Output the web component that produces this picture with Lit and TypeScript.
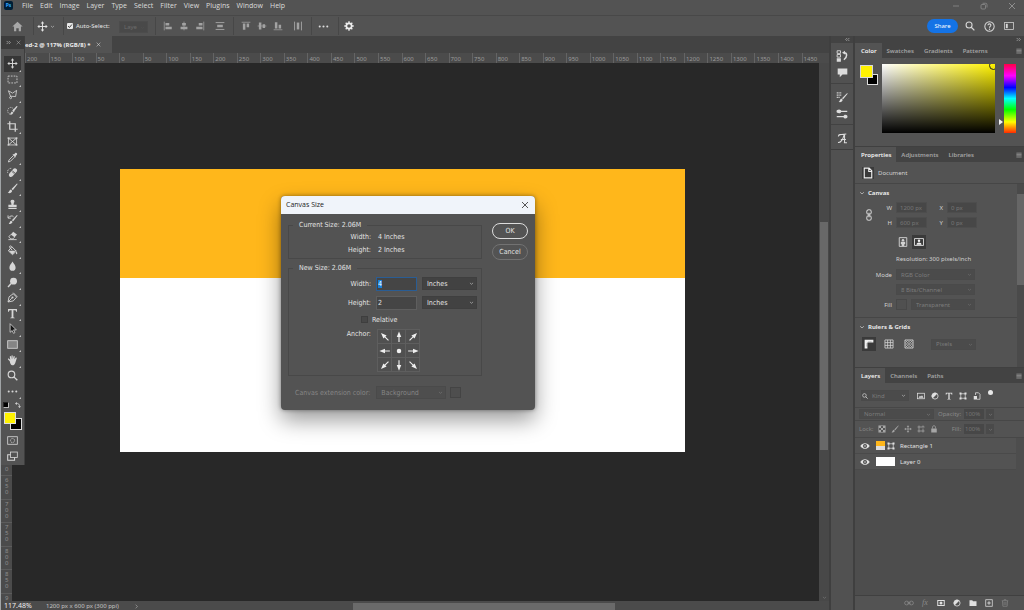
import { LitElement, html, svg, css } from "lit";
import { customElement } from "lit/decorators.js";
import { classMap } from "lit/directives/class-map.js";

/* Icon artwork, drawn on a 16 x 16 grid with currentColor. */
const icons: Record<string, unknown> = {
  move: svg`<path d="M8 2v12M2 8h12" stroke-width="1.4"/><path class="f" d="M8 .5l2.500 3h-5zM8 15.500l2.500-3h-5zM.5 8l3-2.500v5zM15.500 8l-3-2.500v5z"/>`,
  marquee: svg`<rect x="1.500" y="3" width="13" height="10" stroke-dasharray="2.500 1.600" stroke-width="1.200"/>`,
  lasso: svg`<path d="M5.500 11.500L2 2.500l6 3.500 6-4-1.500 9-7-.5c-2 .5-2.500 3-.5 3.500s2-2 .5-3" stroke-width="1.200"/>`,
  quick: svg`<ellipse cx="5.500" cy="8.500" rx="4.500" ry="5" stroke-dasharray="1.600 1.300"/><path class="f" d="M15.500 2L9.500 10l-2-1.500L14 1.500zM7 9.500l2 1.500c-.5 2.500-3 3.500-5 2.500 1.500-.5 1.500-3 3-4z"/>`,
  crop: svg`<path d="M4 .5V12h11.500M.5 4H12v11.500" stroke-width="1.800"/>`,
  frame: svg`<rect x="2" y="3" width="12" height="10"/><path d="M2 3l12 10M14 3L2 13M.5 3h3M12.500 3h3M.5 13h3M12.500 13h3" stroke-width="1.300"/>`,
  dropper: svg`<path d="M9 5.500L3 11.500l-1 3 3-1 6-6" stroke-width="1.300"/><path class="f" d="M8 4l1.200-1 .8.700 2-2.200c1.500-1.200 3.700 1 2.500 2.500l-2.200 2 .7.800-1 1.200z"/>`,
  heal: svg`<path class="f" d="M3.500 9.500l6-7c2.500-2.500 7 1 4.500 4.500l-6 6.500c-3 3-7-1-4.500-4z"/><path d="M1 8.500C0 5 3 1.500 6.500 2" stroke-dasharray="1.500 1.200"/><path class="k" d="M7 6.500l4 3.500M8 5.500l4 3.500" stroke-width="1"/>`,
  brush: svg`<path class="f" d="M15.500 1.500L8.500 10.500l-2-1.700L14.500.8zM5.500 9.500l2 1.800c-.3 3-3.500 4.200-6.500 3 2-.6 2-4 4.500-4.800z"/>`,
  stamp: svg`<path class="f" d="M8 1c3.200 0 3.500 3 2 4.500L9.500 8.500H14V12H2V8.500h4.500L6 5.500C4.500 4 4.800 1 8 1zM2 13.200h12v1.300H2z"/>`,
  history: svg`<path class="f" d="M15.500 2L9 10.500 7 9l7.500-7.700zM6 9.700l2 1.700c-.3 2.600-3 3.600-5.500 2.600C4 13 4 10.500 6 9.700z"/><path d="M1.500 2v4h4M2 5.500C4 2.500 8 2 9.500 4" stroke-width="1.300"/>`,
  eraser: svg`<path class="f" d="M9 2.500l5.500 4L11 10.500 5.500 6.500z"/><path d="M5.500 6.500L2.500 10l3 3h3L11 10.500M2 14h12" stroke-width="1.300"/>`,
  bucket: svg`<path d="M7 2.500L13.500 9 8 14 2 8.500zM7 2.500C5 .5 3 1.500 4 3.500l3.500 4" stroke-width="1.400"/><path class="f" d="M2.500 8.500h10L8 13.500zM13.500 9c1.500 2 2 3.500.8 4.300-1.300 0-1.600-1.800-.8-4.300z"/>`,
  drop: svg`<path class="f" d="M8 .8c2 3.500 4.500 5.500 4.500 9a4.500 4.500 0 0 1-9 0c0-3.500 2.500-5.500 4.500-9z"/>`,
  dodge: svg`<circle class="f" cx="9.500" cy="6" r="5"/><path d="M6 9.500L1.500 14.500" stroke-width="2"/>`,
  pen: svg`<path d="M1.500 14.500L3 7l6-4.500 5 5L9 13zM1.500 14.500l5.500-5.500M9 1l6 6" stroke-width="1.300"/><circle class="f" cx="8" cy="8" r="1.500"/>`,
  type: svg`<path class="f" d="M1.500 1.500h13V5.500h-1.300c-.2-1.700-.7-2.300-2.500-2.300H9.300v9.800c0 .7.700 1 2 1v1H4.700v-1c1.300 0 2-.3 2-1V3.200H5.300C3.500 3.200 3 3.800 2.800 5.500H1.500z"/>`,
  arrow: svg`<path d="M4.500 1v12.500l3-2.500 2 4 2-1-2-4h4z" fill="#151515"/>`,
  rect: svg`<rect x="1" y="2.500" width="14" height="11" fill="#858585"/>`,
  hand: svg`<path class="f" d="M4 9L1.500 6.500c-.7-1 .5-2 1.500-1.200l1.700 1.500L4 2.500c0-1.200 1.500-1.400 1.800-.2L6.500 6V1.500c0-1.300 1.800-1.300 1.800 0V6L9.500 2c.4-1.200 2-.8 1.800.4L10.700 6.500 12.500 4c.8-1 2.100-.2 1.700.9L12 11.500c-1 2.500-2 3.500-4 3.500-2.500 0-3.500-3-4-6z"/>`,
  search: svg`<circle cx="6.500" cy="6.500" r="4.800" stroke-width="1.700"/><path d="M10 10l5 5" stroke-width="2"/>`,
  dots: svg`<circle class="f" cx="2.500" cy="8" r="1.500"/><circle class="f" cx="8" cy="8" r="1.500"/><circle class="f" cx="13.500" cy="8" r="1.500"/>`,
  mask: svg`<rect x="1" y="2.500" width="14" height="11"/><circle cx="8" cy="8" r="3" stroke-dasharray="1.500 1"/>`,
  screens: svg`<rect x="5" y="1.500" width="10" height="8"/><path d="M5 5.500H1v8h10V9.500" stroke-width="1.500"/>`,
  home: svg`<path class="f" d="M8 1l7.500 7H13v7H9.800v-4.500H6.200V15H3V8H.5z"/>`,
  chev: svg`<path d="M3 6l5 4.500L13 6" stroke-width="1.600"/>`,
  chevR: svg`<path d="M5 2l6 6-6 6" stroke-width="1.600"/>`,
  alL: svg`<path d="M2 1v14"/><path class="f" d="M4 3h6v4H4zM4 9h10v4H4z"/>`,
  alC: svg`<path d="M8 1v14"/><path class="f" d="M5 3h6v4H5zM2.500 9h11v4h-11z"/>`,
  alR: svg`<path d="M14 1v14"/><path class="f" d="M6 3h6v4H6zM2 9h10v4H2z"/>`,
  alH: svg`<path d="M1 2.500h14M1 13.500h14" stroke-width="1.500"/><path class="f" d="M3.500 6h9v4h-9z"/>`,
  alT: svg`<path d="M1 2h14"/><path class="f" d="M3 4h4v10H3zM9 4h4v6H9z"/>`,
  alM: svg`<path d="M1 8h14"/><path class="f" d="M3 2.500h4v11H3zM9 5h4v6H9z"/>`,
  alB: svg`<path d="M1 14h14"/><path class="f" d="M3 2h4v10H3zM9 6h4v6H9z"/>`,
  alV: svg`<path d="M2.500 1v14M13.500 1v14" stroke-width="1.500"/><path class="f" d="M6 2.500h4v11H6z"/>`,
  gear: svg`<circle cx="8" cy="8" r="4.200" stroke-width="2.600"/><path d="M8 .5v3M8 12.500v3M.5 8h3M12.500 8h3M2.700 2.700l2 2M11.300 11.300l2 2M13.300 2.700l-2 2M4.700 11.300l-2 2" stroke-width="2.200"/>`,
  help: svg`<circle cx="8" cy="8" r="6.800" stroke-width="1.500"/><path d="M5.700 6.200C6 3.400 10.300 3.600 10 6.300 9.900 7.700 8 7.800 8 9.700" stroke-width="1.600"/><circle class="f" cx="8" cy="12" r="1"/>`,
  panelIc: svg`<rect x="1" y="2.500" width="14" height="11"/><path class="f" d="M3 4.500h3v7H3z"/>`,
  min: svg`<path d="M2 8h12"/>`,
  restore: svg`<rect x="2" y="5" width="9" height="9" rx="2"/><path d="M5 2.500h6a3 3 0 0 1 3 3V11"/>`,
  close: svg`<path d="M2 2l12 12M14 2L2 14" stroke-width="1.500"/>`,
  left2: svg`<path d="M7 3L2 8l5 5M14 3L9 8l5 5" stroke-width="2.200"/>`,
  right2: svg`<path d="M2 3l5 5-5 5M9 3l5 5-5 5" stroke-width="2.200"/>`,
  burger: svg`<path d="M1 3h14M1 6.500h14M1 10h14M1 13.500h14" stroke-width="1.800"/>`,
  dkHist: svg`<path d="M1.500 1h4.500v3.500H1.500zM1.500 6h4.500v3.500H1.500z"/><path class="f" d="M1 11h5.500v4.500H1zM8 3.500L12 1v5z"/><path d="M11 3.500c4 0 4.500 6-.5 9.500" stroke-width="2"/>`,
  dkChat: svg`<path class="f" d="M1 2h14v9H8l-4 4v-4H1z"/>`,
  dkBrush: svg`<path class="f" d="M15.500 3.500L9.500 11 8 9.500l7-7zM7 10l2 1.800c-.5 2.700-2.500 3.700-5.500 3 1.800-1 1.700-3.800 3.500-4.800z"/><path d="M1 2.500h6M1 5.500h6M1 8.500h4" stroke-dasharray="1.500 .8" stroke-width="1.500"/>`,
  dkSet: svg`<path d="M1 4.500h14M1 11.500h14" stroke-width="1.500"/><path class="f" d="M1 3c3-2 6-1 6 1.500S4 7.500 1 6zM15 10c-2-1.500-5-1-5 1.500s3 3 5 1.500z"/>`,
  dkGlyph: svg`<path d="M1.500 13.500c4 1.500 7.500-5 9-11.500M11 1.500V14M2 5C2 1.500 6 2 13.500 1.500M5.500 9.500H13M10 14.300h4.500" stroke-width="1.500"/>`,
  page: svg`<path d="M3 1.500h6.500L13 5v9.500H3zM9 1.500V6h4" stroke-width="1.500"/>`,
  link: svg`<rect x="5" y="1" width="6" height="6" rx="2.500" stroke-width="1.400"/><rect x="5" y="9" width="6" height="6" rx="2.500" stroke-width="1.400"/><path d="M8 5v6" stroke-width="1.500"/>`,
  portrait: svg`<path d="M2 1h12v14H2z" stroke-width="1.500"/><circle class="f" cx="8" cy="5" r="2"/><path class="f" d="M4.500 7.500h7v4H10v3H6v-3H4.500z"/>`,
  landscape: svg`<path d="M.8 2.500h14.400v11H.8z" stroke-width="1.300"/><circle class="f" cx="8" cy="6" r="2"/><path class="f" d="M4 12.500c0-5 8-5 8 0z"/>`,
  ruler: svg`<path class="f" d="M1 1h14v4.500H5.500V15H1z"/><path class="k" d="M8 3.500v2M11 3.500v2M3.500 8h2M3.500 11h2" stroke-width=".7"/>`,
  grid: svg`<path d="M1.500 1.500h13v13h-13zM5.800 1.500v13M10.200 1.500v13M1.500 5.800h13M1.500 10.200h13" stroke-width="1.300"/>`,
  gridX: svg`<path d="M1.500 1.500h13v13h-13z" stroke-width="1.300"/><path d="M2 6L6 2M2 10L10 2M2 14L14 2M6 14l8-8M10 14l4-4M10 2l4 4M6 2l8 8M2 2l12 12M2 6l8 8M2 10l4 4" stroke-width=".8"/>`,
  image: svg`<rect x="1" y="2.500" width="14" height="11" stroke-width="1.500"/><path class="f" d="M3 11.500l3-4 2 2 2-3 3 5z"/>`,
  half: svg`<circle cx="8" cy="8" r="6.200" stroke-width="1.600"/><path class="f" d="M12.500 3.500a6.300 6.300 0 0 0-9 9z"/>`,
  shape: svg`<path d="M3.500 3.500h9v9h-9z" stroke-width="1.400"/><path class="f" d="M1 1h4v4H1zM11 1h4v4h-4zM1 11h4v4H1zM11 11h4v4h-4z"/>`,
  smart: svg`<path d="M5 1.500h6L14 4.500v10H8M5 1.500V6" stroke-width="1.500"/><path class="f" d="M1.500 8H8v7H1.500z"/>`,
  check: svg`<rect x="1.500" y="1.500" width="13" height="13"/><path class="f" d="M2 2h4v4H2zM10 2h4v4h-4zM6 6h4v4H6zM2 10h4v4H2zM10 10h4v4h-4z"/>`,
  art: svg`<path d="M1 4h14M4 1v14M12 1v3M12 7v8M1 12h14" stroke-width="1.500"/>`,
  lock: svg`<path class="f" d="M2.500 7h11v8h-11z"/><path d="M5 7V4.500c0-4 6-4 6 0V7" stroke-width="1.600"/>`,
  eye: svg`<path class="f" d="M.5 8C4 2 12 2 15.500 8 12 14 4 14 .5 8z"/><circle cx="8" cy="8" r="3.200" fill="#4a4a4a" stroke="none"/><circle class="f" cx="8" cy="8" r="1.300"/>`,
  chain: svg`<rect x="1" y="5" width="6.500" height="6" rx="3"/><rect x="8.500" y="5" width="6.500" height="6" rx="3"/><path d="M5 8h6"/>`,
  addMask: svg`<rect x="1.500" y="3" width="13" height="10" stroke-width="2"/><circle class="f" cx="8" cy="8" r="3"/>`,
  folder: svg`<path class="f" d="M1 2.500h5.500L8 4.500h7V14H1z"/>`,
  plus: svg`<rect x="1.500" y="1.500" width="13" height="13" stroke-width="1.500"/><path d="M8 4.500v7M4.500 8h7" stroke-width="1.700"/>`,
  trash: svg`<path d="M1.500 3.500h13M6 3V1.500h4V3M3 4l.7 10.500h8.600L13 4M6.200 6v6M9.800 6v6" stroke-width="1.300"/>`,
  swap: svg`<path d="M3.500 4c6-1 8.500 2 8.500 8" stroke-width="2"/><path class="f" d="M5 0v8L0 4zM8 11h8l-4 5z"/>`,
  tick: svg`<path d="M3 8l3.500 4L13 4" stroke-width="2.500"/>`,
  anchor: svg`<path d="M8 5v9.500" stroke-width="1.500"/><path class="f" d="M8 .5L11 8H5z"/>`,
  dot: svg`<circle class="f" cx="8" cy="8" r="3"/>`,
};

const icon = (name: string, cls = "s10") =>
  html`<svg class="ic ${cls}" viewBox="0 0 16 16" aria-hidden="true">${icons[name]}</svg>`;

const base = css`
  * { box-sizing: border-box; }
  .ic { display: block; flex: none; fill: none; stroke: currentColor; stroke-width: 1.2; }
  .ic .f { fill: currentColor; stroke: none; }
  .ic .k { stroke: #444; }
  .s5 { width: 5px; height: 5px; }
  .s6 { width: 6px; height: 6px; }
  .s8 { width: 8px; height: 8px; }
  .s10 { width: 10px; height: 10px; }
  .s11 { width: 11px; height: 11px; }
  .s12 { width: 12px; height: 12px; }
  button, input, select {
    font: inherit; color: inherit; margin: 0; padding: 0; border: 0;
    background: none; border-radius: 0; outline: none; min-width: 0;
  }
  button { display: flex; align-items: center; justify-content: center; }
  .sel { display: grid; align-items: center; }
  .sel select {
    grid-area: 1 / 1; appearance: none; width: 100%; height: 100%;
    background: #454545; border: 1px solid #4a4a4a; padding: 0 10px 0 4px;
  }
  .sel .ic { grid-area: 1 / 1; justify-self: end; margin-right: 3px; pointer-events: none; }
`;

const dropdown = (label: string, value: string, cls = "", disabled = false) => html`
  <span class="sel ${cls}">
    <select aria-label=${label} ?disabled=${disabled}><option>${value}</option></select>
    ${icon("chev", "s5")}
  </span>`;

@customElement("ps-topbar")
export class PsTopbar extends LitElement {
  static styles = [base, css`
    :host { display: block; color: #dcdcdc; background: #535353; }
    .menu { display: flex; align-items: center; height: 16px; border-bottom: 1px solid #484848; padding: 0 8px 4px 3px; }
    .logo { width: 9px; height: 9px; border-radius: 2px; background: #001e36; color: #31a8ff; font-size: 5px; line-height: 9px; font-weight: 700; text-align: center; margin-right: 9px; }
    nav { display: flex; gap: 7px; font: 7px/10px "Open Sans", sans-serif; flex: 1; }
    nav a { color: inherit; text-decoration: none; }
    .win { display: flex; gap: 20px; color: #a0a0a0; }
    .opts { display: flex; align-items: center; height: 20px; padding-left: 8px; }
    .grp { display: flex; align-items: center; height: 18px; border-right: 1px solid #474747; }
    .grp button { width: 16px; height: 16px; }
    .dim { color: #a2a2a2; }
    .g1 { padding-right: 8px; color: #a8a8a8; }
    .g2 { padding-right: 8px; color: #e4e4e4; }
    .g3 { padding: 0 7px 0 3px; gap: 3px; font-size: 6px; }
    .g4 { padding: 0 5px 0 4px; }
    .g4 button:last-child { margin-left: 4px; }
    .g6 { padding: 0 7px 0 3px; }
    .g7 { border: 0; padding-left: 2px; color: #ededed; }
    .layer { width: 29px; height: 10px; margin-left: 8px; color: #777; }
    input { appearance: none; width: 6px; height: 6px; background: #e8e8e8; border-radius: 1px; grid-area: 1 / 1; }
    .tick { display: grid; align-items: center; color: #333; }
    .tick .ic { grid-area: 1 / 1; pointer-events: none; }
    label { color: #e6e6e6; width: 32px; white-space: nowrap; }
    .right { display: flex; align-items: center; gap: 9px; margin-left: auto; padding-right: 10px; color: #d8d8d8; }
    .share { width: 31px; height: 14px; border-radius: 7px; background: #1473e6; color: #fff; font-size: 6px; margin-right: -2px; }
  `];
  render() {
    const menus = ["File", "Edit", "Image", "Layer", "Type", "Select", "Filter", "View", "Plugins", "Window", "Help"];
    const b = (n: string, label: string, size = "s10") => html`<button aria-label=${label}>${icon(n, size)}</button>`;
    return html`
      <div class="menu">
        <span class="logo">Ps</span>
        <nav>${menus.map((m) => html`<a href="#">${m}</a>`)}</nav>
        <div class="win">
          <button aria-label="Minimize">${icon("min", "s8")}</button>
          <button aria-label="Restore">${icon("restore", "s8")}</button>
          <button aria-label="Close">${icon("close", "s8")}</button>
        </div>
      </div>
      <div class="opts">
        <div class="grp g1">${b("home", "Home", "s11")}</div>
        <div class="grp g2">${b("move", "Move tool", "s11")}${icon("chev", "s5")}</div>
        <div class="grp g3">
          <span class="tick"><input id="auto" type="checkbox" checked />${icon("tick", "s6")}</span>
          <label for="auto">Auto-Select:</label>
          ${dropdown("Auto-select target", "Layer", "layer", true)}
        </div>
        <div class="grp g4 dim">${b("alL", "Align left")}${b("alC", "Align centers")}${b("alR", "Align right")}${b("alH", "Distribute")}</div>
        <div class="grp g4 dim">${b("alT", "Align top")}${b("alM", "Align middles")}${b("alB", "Align bottom")}${b("alV", "Distribute widths")}</div>
        <div class="grp g6">${b("dots", "More", "s11")}</div>
        <div class="grp g7">${b("gear", "Settings")}</div>
        <div class="right">
          <button class="share">Share</button>
          ${b("search", "Search")}${b("help", "Help", "s11")}${b("panelIc", "Workspace")}
        </div>
      </div>`;
  }
}

@customElement("ps-toolbar")
export class PsToolbar extends LitElement {
  static styles = [base, css`
    :host { display: flex; flex-direction: column; background: #535353; color: #d6d6d6; border-right: 1px solid #3e3e3e; }
    .head { display: flex; justify-content: space-between; align-items: center; height: 13px; padding: 0 3px 0 5px; background: #3c3c3c; color: #bbb; margin-bottom: 7px; }
    .tools { display: flex; flex-direction: column; height: 343px; }
    .tools button { flex: 1; position: relative; margin: 0 3px; }
    .on { background: #363636; }
    .more::after { content: ""; position: absolute; right: 0; bottom: 0; border: 1px solid; border-color: transparent #c4c4c4 #c4c4c4 transparent; }
    .mini { display: flex; justify-content: space-between; align-items: center; padding: 3px 3px 0 2px; }
    .pair { position: relative; width: 18px; height: 18px; margin: 4px 0 0 3px; }
    .fg, .bg { position: absolute; width: 12px; height: 12px; border: 1px solid #ddd; }
    .fg { left: 0; top: 0; background: #fff200; }
    .bg { right: 0; bottom: 0; background: #000; }
    .sw { width: 6px; height: 6px; background: #000; border: 1px solid #222; border-right-color: #bbb; border-bottom-color: #bbb; }
    .end { display: flex; flex-direction: column; align-items: center; gap: 5px; padding: 5px 0 3px 0; }
  `];
  render() {
    const tools = ["move", "marquee", "lasso", "quick", "crop", "frame", "dropper", "heal", "brush", "stamp", "history",
      "eraser", "bucket", "drop", "dodge", "pen", "type", "arrow", "rect", "hand", "search", "dots"];
    return html`
      <div class="head">${icon("right2", "s5")}${icon("close", "s5")}</div>
      <div class="tools">
        ${tools.map((t) => html`<button aria-label=${t} class=${classMap({ on: t === "move", more: t !== "frame" && t !== "search" })}>${icon(t, "s11")}</button>`)}
      </div>
      <div class="mini"><span class="sw"></span>${icon("swap", "s6")}</div>
      <div class="pair"><span class="bg"></span><span class="fg"></span></div>
      <div class="end">
        <button aria-label="Quick mask">${icon("mask", "s11")}</button>
        <button aria-label="Screen mode">${icon("screens", "s11")}</button>
      </div>`;
  }
}

@customElement("ps-dialog")
export class PsDialog extends LitElement {
  static styles = [base, css`
    :host { display: block; width: 254px; border-radius: 4px; overflow: hidden; background: #535353; color: #e2e2e2;
      font: 7px/10px "DejaVu Sans Condensed", "DejaVu Sans", sans-serif; box-shadow: 0 10px 22px rgba(0, 0, 0, .4), 0 0 4px rgba(0, 0, 0, .4); }
    .title { display: flex; justify-content: space-between; align-items: center; height: 18px; padding: 0 6px 0 5px;
      background: #f0f4fa; color: #222; font-family: "Open Sans", sans-serif; }
    .body { display: flex; gap: 10px; padding: 6px 7px 11px; }
    .left { flex: 1; }
    .right { display: flex; flex-direction: column; gap: 5px; width: 36px; padding-top: 3px; }
    fieldset { border: 1px solid #484848; margin: 0 0 4px; padding: 0 4px 2px 0; min-width: 0; }
    legend { margin-left: 4px; padding: 0 6px; }
    .row { display: grid; grid-template-columns: 82px 41px 55px; column-gap: 5px; align-items: center; height: 13px; }
    .row > :first-child { text-align: right; }
    .val { padding-left: 2px; }
    .row.tall { height: 19px; }
    .second { padding-top: 1px; }
    .text { width: 41px; height: 14px; background: #454545; border: 1px solid #5e5e5e; padding: 0 1px; }
    .text::selection { background: #1a7fd8; color: #fff; }
    .focus { border-color: #2a5d94; }
    .unit { height: 13px; }
    .unit select { background: #424242; border-color: #3f3f3f; }
    .rel { height: 15px; display: flex; align-items: center; padding-left: 72px; }
    .rel label { display: flex; align-items: center; gap: 4px; }
    .rel input { appearance: none; width: 7px; height: 7px; background: #474747; border: 1px solid #3e3e3e; }
    .anchorRow { display: flex; gap: 6px; align-items: flex-start; padding: 2px 0 1px; }
    .anchorRow > span { width: 82px; text-align: right; }
    .anchor { display: grid; grid-template-columns: repeat(3, 13px); grid-auto-rows: 13px; background: #5e5e5e; gap: 1px; padding: 1px; }
    .anchor button { background: #505050; color: #f0f0f0; }
    .ne { transform: rotate(45deg); } .e { transform: rotate(90deg); }
    .se { transform: rotate(135deg); } .s { transform: rotate(180deg); } .sw { transform: rotate(225deg); }
    .w { transform: rotate(270deg); } .nw { transform: rotate(315deg); }
    .pill { height: 16px; border-radius: 8px; border: 1px solid #727272; }
    .ok { border-color: #dcdcdc; }
    .ext { display: flex; align-items: center; gap: 6px; padding: 6px 0 0 7px; color: #858585; }
    .ext .sel { width: 70px; height: 13px; margin-right: -2px; }
    .ext .sel select { background: #4e4e4e; opacity: 1; }
    .chip { width: 11px; height: 11px; border: 1px solid #444; background: #4e4e4e; }
  `];
  firstUpdated() {
    const field = this.renderRoot.querySelector<HTMLInputElement>("#w");
    field?.focus();
    field?.select();
  }
  render() {
    const dirs = ["nw", "n", "ne", "w", "", "e", "sw", "s", "se"];
    return html`
      <div class="title"><span>Canvas Size</span><button aria-label="Close">${icon("close", "s8")}</button></div>
      <div class="body">
        <div class="left">
          <fieldset>
            <legend>Current Size: 2.06M</legend>
            <div class="row"><span>Width:</span><span class="val">4 Inches</span></div>
            <div class="row"><span>Height:</span><span class="val">2 Inches</span></div>
          </fieldset>
          <fieldset class="second">
            <legend>New Size: 2.06M</legend>
            <div class="row tall"><label for="w">Width:</label><input id="w" class="text focus" value="4" />${dropdown("Width unit", "Inches", "unit")}</div>
            <div class="row tall"><label for="h">Height:</label><input id="h" class="text" value="2" />${dropdown("Height unit", "Inches", "unit")}</div>
            <div class="rel"><label><input type="checkbox" />Relative</label></div>
            <div class="anchorRow"><span>Anchor:</span>
              <div class="anchor">${dirs.map((d) => html`<button aria-label="Anchor ${d || "center"}">${icon(d ? "anchor" : "dot", `s12 ${d}`)}</button>`)}</div>
            </div>
          </fieldset>
          <div class="ext"><span>Canvas extension color:</span>${dropdown("Canvas extension color", "Background", "", true)}<span class="chip"></span></div>
        </div>
        <div class="right">
          <button class="pill ok">OK</button>
          <button class="pill">Cancel</button>
        </div>
      </div>`;
  }
}

@customElement("ps-document")
export class PsDocument extends LitElement {
  static styles = [base, css`
    :host { display: flex; flex-direction: column; position: relative; background: #434343; min-width: 0; overflow: hidden; }
    .tabs { display: flex; height: 17px; padding-left: 23px; }
    .tab { display: flex; align-items: center; gap: 5px; width: 88px; padding-left: 1px; background: #535353; color: #ececec; font: 700 6px/10px "Open Sans", sans-serif; white-space: nowrap; }
    .hr { display: flex; height: 10px; background: #4b4b4b; padding-left: 24px; overflow: hidden; color: #9a9a9a; }
    .hscale { display: flex; flex: 0 0 800px; }
    .hscale span { flex: 1; border-left: 1px solid #646464; padding-left: 1px; font-size: 6px; line-height: 12px; }
    .mid { flex: 1; display: grid; grid-template-columns: 11px 1fr 10px; min-height: 0; }
    .vr { background: #4b4b4b; overflow: hidden; padding-top: 12px; color: #8e8e8e; font-size: 6px; line-height: 6px; }
    .vscale { display: flex; flex-direction: column; height: 518px; }
    .vcell { border-top: 1px solid #5c5c5c; padding: 1px 0 0 4px; display: flex; flex-direction: column; }
    .vscale .vcell { flex: 1; }
    .canvas { background: #282828; position: relative; overflow: hidden; }
    .board { position: absolute; left: 108px; top: 106px; width: 565px; height: 283px; background: #fff; }
    .shape { height: 109px; background: #ffb71b; }
    .dlg { position: absolute; left: 269px; top: 133px; }
    .vs { background: #484848; display: flex; flex-direction: column; align-items: center; justify-content: space-between; padding: 1px 0; color: #888; position: relative; }
    .vthumb { position: absolute; left: 1px; right: 1px; top: 29.500%; height: 42.500%; background: #686868; }
    .status { display: flex; align-items: center; height: 9px; background: #4b4b4b; padding: 1px 0 0 3px; color: #c4c4c4; font-size: 6px; line-height: 8px; white-space: nowrap; }
    .zoom { width: 42px; color: #eee; font-size: 7px; }
    .info { width: 88px; }
    .track { flex: 1; display: flex; justify-content: center; }
    .hthumb { width: 38%; height: 7px; background: #6a6a6a; }
    .tools { position: absolute; left: 0; top: 0; width: 24px; }
  `];
  render() {
    const h = Array.from({ length: 34 }, (_, i) => Math.abs(i * 50 - 200));
    const v = Array.from({ length: 22 }, (_, i) => Math.abs(i * 50 - 200));
    return html`
      <div class="tabs"><div class="tab"><span>ed-2 @ 117% (RGB/8) *</span>${icon("close", "s5")}</div></div>
      <div class="hr"><div class="hscale">${h.map((n) => html`<span>${n}</span>`)}</div></div>
      <div class="mid">
        <div class="vr">
          <div class="vscale">${v.map((n) => html`<div class="vcell">${String(n).split("").map((d) => html`<span>${d}</span>`)}</div>`)}</div>
          <div class="vcell"><span>9</span></div>
        </div>
        <div class="canvas">
          <div class="board"><div class="shape"></div></div>
          <ps-dialog class="dlg" role="dialog" aria-label="Canvas Size"></ps-dialog>
        </div>
        <div class="vs"><span></span><div class="vthumb"></div>${icon("chev", "s5")}</div>
      </div>
      <div class="status"><span class="zoom">117.48%</span><span class="info">1200 px x 600 px (300 ppi)</span>${icon("chevR", "s5")}<div class="track"><div class="hthumb"></div></div></div>
      <ps-toolbar class="tools"></ps-toolbar>`;
  }
}

@customElement("ps-panels")
export class PsPanels extends LitElement {
  static styles = [base, css`
    :host { display: grid; grid-template-columns: 22px 169px; column-gap: 2px; background: #3f3f3f; color: #d2d2d2; padding-left: 2px; font-size: 6px; line-height: 8px; }
    .strip { height: 7px; display: flex; align-items: center; justify-content: flex-end; padding-right: 3px; background: #434343; color: #b0b0b0; }
    .dock { display: flex; flex-direction: column; background: #515151; }
    .dgrp { display: flex; flex-direction: column; align-items: center; justify-content: center; gap: 5px; height: 41px; padding-top: 2px; border-bottom: 1px solid #424242; color: #dcdcdc; }
    .dgrp.one { height: 25px; border-bottom-color: #3d3d3d; }
    .col { display: flex; flex-direction: column; min-width: 0; }
    .tabs { display: flex; align-items: stretch; height: 15px; background: #434343; font-weight: 700; color: #a4a4a4; padding-right: 2px; }
    .tabs button { padding: 0 5px; font-weight: 600; }
    .tabs .act { background: #535353; color: #f2f2f2; padding-left: 6px; }
    .tabs .ic { margin: auto 0 auto auto; width: 6px; height: 6px; }
    .panel { background: #535353; border-bottom: 1px solid #404040; }
    .color { display: grid; grid-template-columns: 17px 1fr 17px; column-gap: 4px; padding: 6px 8px 13px 6px; height: 89px; }
    .pair { position: relative; height: 19px; margin-top: 2px; }
    .fg, .bg { position: absolute; width: 11px; height: 11px; }
    .fg { left: 0; top: 0; background: #fff200; outline: 1px solid #d8d8d8; }
    .bg { right: 0; bottom: 0; background: #000; border: 1px solid #ddd; }
    .field { background: linear-gradient(to top, #000, transparent), linear-gradient(to right, #fff, #fff200); position: relative; overflow: hidden; }
    .field::after { content: ""; position: absolute; right: -3px; top: -3px; width: 7px; height: 7px; border: 1px solid #222; border-radius: 50%; }
    .huebox { display: flex; align-items: stretch; gap: 1px; }
    .mark { align-self: flex-end; margin-bottom: 8px; border: 3px solid transparent; border-left: 4px solid #f4f4f4; border-right: 0; }
    .hue { flex: 1; background: linear-gradient(#ff0048, #f0f 17%, #00f 34%, #0ff 50%, #0f0 66%, #ff0 84%, #ff2a00); }
    .doc { display: flex; align-items: center; gap: 4px; height: 22px; padding: 1px 0 0 7px; border-bottom: 1px solid #464646; }
    .tile { width: 14px; height: 14px; }
    .dark { background: #3a3a3a; color: #f0f0f0; }
    .scroll { display: grid; grid-template-columns: 1fr 7px; height: 183px; }
    .bar { background: #4a4a4a; padding-top: 10px; }
    .thumb { height: 91px; background: #666; }
    .sec { display: flex; align-items: center; gap: 3px; height: 17px; padding-left: 4px; font-weight: 700; color: #e8e8e8; }
    .size { display: grid; grid-template-columns: 12px 13px 31px 12px 30px; column-gap: 4px; row-gap: 4px; padding: 1px 0 0 8px; align-items: center; }
    .size label { text-align: right; }
    .size .ic { grid-row: 1 / 3; }
    .size input { height: 11px; width: 100%; }
    .in { background: #474747; border: 1px solid #4d4d4d; color: #777; padding: 0 3px; height: 11px; }
    .orient { display: flex; gap: 2px; padding: 7px 0 5px 41px; }
    .res { padding: 1px 0 4px 41px; white-space: nowrap; }
    .prop { display: grid; grid-template-columns: 37px 79px; column-gap: 4px; align-items: center; height: 15px; text-align: right; }
    .prop .sel, .dimsel { height: 11px; color: #7a7a7a; }
    .sel select:disabled { opacity: 1; background: #4b4b4b; color: #7c7c7c; }
    .fill { display: grid; grid-template-columns: 11px 1fr; gap: 4px; }
    .chip { border: 1px solid #484848; background: #505050; }
    .rule { border-top: 1px solid #464646; margin-top: 5px; }
    .grids { display: flex; align-items: center; gap: 6px; padding: 2px 0 0 7px; }
    .grids .sel { width: 45px; margin-left: 9px; }
    .filter { display: flex; align-items: center; height: 25px; padding: 1px 0 0 6px; border-bottom: 1px solid #474747; color: #e0e0e0; }
    .filter button { width: 14px; height: 14px; }
    .kind { display: grid; align-items: center; width: 48px; height: 11px; margin-right: 5px; }
    .kind > * { grid-area: 1 / 1; }
    .kind .sel { height: 11px; }
    .kind select { padding-left: 10px; }
    .kind > .ic { z-index: 1; margin-left: 1px; }
    .knob { width: 5px; height: 5px; border-radius: 50%; background: #e8e8e8; }
    .knobs { align-self: stretch; display: flex; align-items: center; padding: 0 0 6px 4px; }
    .line { display: grid; grid-template-columns: 75px 26px 20px 8px; align-items: center; column-gap: 2px; height: 13px; padding-left: 4px; border-bottom: 1px solid #474747; color: #8a8a8a; }
    .line.tall { height: 17px; }
    .line label { text-align: right; padding-right: 1px; }
    .line .sel { height: 10px; }
    .locks { display: flex; align-items: center; gap: 5px; color: #a6a6a6; }
    .locks span { color: #858585; }
    .num { height: 10px; width: 20px; background: #474747; color: #757575; padding: 0 1px; }
    .step { background: #4a4a4a; height: 10px; display: flex; align-items: center; justify-content: center; }
    .layers { flex: 1; background: #4d4d4d; margin: 0; padding: 0; list-style: none; }
    .layers li { display: flex; align-items: center; height: 16px; margin-right: 8px; padding-left: 5px; background: #535353; border-bottom: 1px solid #4a4a4a; color: #e2e2e2; }
    .layers button { width: 9px; margin-right: 7px; }
    .t1 { width: 9px; height: 9px; background: linear-gradient(#ffb71b 50%, #ddd 50%); margin-right: 2px; }
    .t2 { width: 19px; height: 9px; background: #fff; }
    .name { margin-left: 5px; }
    .foot { display: flex; justify-content: flex-end; align-items: center; gap: 6px; height: 15px; padding-right: 14px; background: #535353; border-top: 1px solid #404040; color: #e0e0e0; }
    .foot .off { color: #8b8b8b; }
    .foot button { width: 10px; font: italic 8px/10px "Liberation Serif", serif; }
  `];
  private tabs(names: string[]) {
    return html`<div class="tabs" role="tablist">${names.map((n, i) =>
      html`<button role="tab" class=${classMap({ act: i === 0 })}>${n}</button>`)}${icon("burger", "s6")}</div>`;
  }
  private tile(name: string, label: string, dark = false) {
    return html`<button class="tile ${dark ? "dark" : ""}" aria-label=${label}>${icon(name, "s10")}</button>`;
  }
  render() {
    return html`
      <div class="dock">
        <div class="strip">${icon("left2", "s5")}</div>
        <div class="dgrp">${icon("dkHist", "s12")}${icon("dkChat", "s11")}</div>
        <div class="dgrp">${icon("dkBrush", "s12")}${icon("dkSet", "s12")}</div>
        <div class="dgrp one">${icon("dkGlyph", "s11")}</div>
      </div>
      <div class="col">
        <div class="strip">${icon("right2", "s5")}</div>
        ${this.tabs(["Color", "Swatches", "Gradients", "Patterns"])}
        <div class="panel color">
          <div class="pair"><span class="bg"></span><span class="fg"></span></div>
          <div class="field"></div>
          <div class="huebox"><span class="mark"></span><div class="hue"></div></div>
        </div>
        ${this.tabs(["Properties", "Adjustments", "Libraries"])}
        <div class="panel">
          <div class="doc"><span class="dark">${icon("page", "s12")}</span>Document</div>
          <div class="scroll">
            <div>
              <div class="sec">${icon("chev", "s6")}Canvas</div>
              <div class="size">
                ${icon("link", "s12")}
                <label for="pw">W</label><input id="pw" class="in" value="1200 px" disabled />
                <label for="px">X</label><input id="px" class="in" value="0 px" disabled />
                <label for="ph">H</label><input id="ph" class="in" value="600 px" disabled />
                <label for="py">Y</label><input id="py" class="in" value="0 px" disabled />
              </div>
              <div class="orient">${this.tile("portrait", "Portrait")}${this.tile("landscape", "Landscape", true)}</div>
              <div class="res">Resolution: 300 pixels/inch</div>
              <div class="prop"><span>Mode</span>${dropdown("Mode", "RGB Color", "", true)}</div>
              <div class="prop"><span></span>${dropdown("Depth", "8 Bits/Channel", "", true)}</div>
              <div class="prop"><span>Fill</span><div class="fill"><span class="chip"></span>${dropdown("Fill", "Transparent", "", true)}</div></div>
              <div class="rule"></div>
              <div class="sec">${icon("chev", "s6")}Rulers &amp; Grids</div>
              <div class="grids">${this.tile("ruler", "Rulers", true)}${this.tile("grid", "Grid")}${this.tile("gridX", "Guides")}${dropdown("Units", "Pixels", "dimsel", true)}</div>
            </div>
            <div class="bar"><div class="thumb"></div></div>
          </div>
        </div>
        ${this.tabs(["Layers", "Channels", "Paths"])}
        <div class="panel filter">
          <span class="kind">${icon("search", "s6")}${dropdown("Filter kind", "Kind", "", true)}</span>
          ${["image", "half", "type", "shape", "smart"].map((n) => html`<button aria-label="Filter ${n}">${icon(n, "s8")}</button>`)}
          <span class="knobs"><span class="knob"></span></span>
        </div>
        <div class="panel line">${dropdown("Blend mode", "Normal", "", true)}<label for="op">Opacity:</label><input id="op" class="num" value="100%" disabled /><span class="step">${icon("chev", "s5")}</span></div>
        <div class="panel line tall">
          <div class="locks"><span>Lock:</span>${["check", "brush", "move", "art", "lock"].map((n) => icon(n, "s8"))}</div>
          <label for="fl">Fill:</label><input id="fl" class="num" value="100%" disabled /><span class="step">${icon("chev", "s5")}</span>
        </div>
        <ul class="layers">
          <li><button aria-label="Toggle Rectangle 1">${icon("eye", "s10")}</button><span class="t1"></span>${icon("shape", "s8")}<span class="name">Rectangle 1</span></li>
          <li><button aria-label="Toggle Layer 0">${icon("eye", "s10")}</button><span class="t2"></span><span class="name">Layer 0</span></li>
        </ul>
        <div class="foot">
          <button class="off" aria-label="Link">${icon("chain", "s10")}</button><button class="off">fx</button>
          ${["addMask", "half", "folder", "plus"].map((n) => html`<button aria-label=${n}>${icon(n, "s8")}</button>`)}
          <button class="off" aria-label="Delete">${icon("trash", "s8")}</button>
        </div>
      </div>`;
  }
}

@customElement("app-root")
export class AppRoot extends LitElement {
  static styles = css`
    :host { box-sizing: border-box; display: flex; flex-direction: column; height: 100vh; overflow: hidden; background: #434343; border-left: 1px solid #a0a4a6; font: 7px/10px "Noto Sans", "Open Sans", sans-serif; }
    .work { flex: 1; display: grid; grid-template-columns: 1fr auto; min-height: 0; }
  `;
  render() {
    return html`
      <ps-topbar></ps-topbar>
      <div class="work"><ps-document></ps-document><ps-panels></ps-panels></div>`;
  }
}
